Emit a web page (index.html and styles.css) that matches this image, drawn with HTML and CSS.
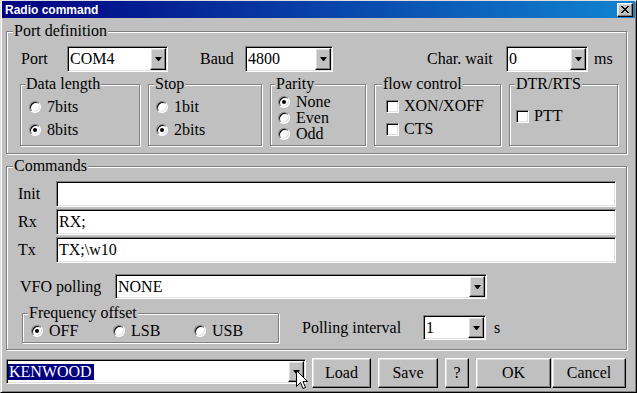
FILE: index.html
```html
<!DOCTYPE html>
<html lang="en">
  <head>
    <meta charset="UTF-8" />
    <meta name="viewport" content="width=device-width, initial-scale=1.0" />
    <title>Radio command</title>
    <link rel="stylesheet" href="styles.css">
  </head>
  <body>
    <div class="window">
      <div class="titlebar">
        <span class="title">Radio command</span>
        <span class="close raised">
          <svg width="8" height="7" viewBox="0 0 8 7" shape-rendering="crispEdges"><path d="M0 0h2v1h1v1h2v-1h1v-1h2v1h-1v1h-1v1h-1v1h1v1h1v1h1v1h-2v-1h-1v-1h-2v1h-1v1h-2v-1h1v-1h1v-1h1v-1h-1v-1h-1v-1h-1z" fill="#000"/></svg>
        </span>
      </div>

      <div class="client">
        <fieldset class="group port">
          <legend>Port definition</legend>
          <div class="port-row">
            <span class="lbl lbl-port">Port</span>
            <div class="combo combo-port"><span class="val">COM4</span><span class="drop raised"></span></div>
            <span class="lbl lbl-baud">Baud</span>
            <div class="combo combo-baud"><span class="val">4800</span><span class="drop raised"></span></div>
            <span class="lbl lbl-wait">Char. wait</span>
            <div class="combo combo-wait"><span class="val">0</span><span class="drop raised"></span></div>
            <span class="lbl lbl-ms">ms</span>
          </div>

          <div class="sub-row">
            <fieldset class="group sub sub-data">
              <legend>Data length</legend>
              <div class="opts">
                <div class="opt"><span class="radio"></span>7bits</div>
                <div class="opt"><span class="radio on"></span>8bits</div>
              </div>
            </fieldset>
            <fieldset class="group sub sub-stop">
              <legend>Stop</legend>
              <div class="opts">
                <div class="opt"><span class="radio"></span>1bit</div>
                <div class="opt"><span class="radio on"></span>2bits</div>
              </div>
            </fieldset>
            <fieldset class="group sub sub-parity">
              <legend>Parity</legend>
              <div class="opts">
                <div class="opt"><span class="radio on"></span>None</div>
                <div class="opt"><span class="radio"></span>Even</div>
                <div class="opt"><span class="radio"></span>Odd</div>
              </div>
            </fieldset>
            <fieldset class="group sub sub-flow">
              <legend>flow control</legend>
              <div class="opts">
                <div class="opt"><span class="check"></span>XON/XOFF</div>
                <div class="opt"><span class="check"></span>CTS</div>
              </div>
            </fieldset>
            <fieldset class="group sub sub-dtr">
              <legend>DTR/RTS</legend>
              <div class="opts">
                <div class="opt"><span class="check"></span>PTT</div>
              </div>
            </fieldset>
          </div>
        </fieldset>

        <fieldset class="group commands">
          <legend>Commands</legend>
          <div class="cmd-body">
            <div class="cmd-row"><span class="lbl lbl-cmd">Init</span><div class="field"></div></div>
            <div class="cmd-row"><span class="lbl lbl-cmd">Rx</span><div class="field">RX;</div></div>
            <div class="cmd-row"><span class="lbl lbl-cmd">Tx</span><div class="field">TX;\w10</div></div>

            <div class="vfo-row">
              <span class="lbl lbl-vfo">VFO polling</span>
              <div class="combo combo-vfo"><span class="val">NONE</span><span class="drop raised"></span></div>
            </div>

            <div class="offset-row">
              <fieldset class="group sub sub-offset">
                <legend>Frequency offset</legend>
                <div class="offset-opts">
                  <div class="opt opt-off"><span class="radio on"></span>OFF</div>
                  <div class="opt opt-lsb"><span class="radio"></span>LSB</div>
                  <div class="opt"><span class="radio"></span>USB</div>
                </div>
              </fieldset>
              <span class="lbl lbl-poll">Polling interval</span>
              <div class="combo combo-poll"><span class="val">1</span><span class="drop raised"></span></div>
              <span class="lbl lbl-s">s</span>
            </div>
          </div>
        </fieldset>

        <div class="bottom-row">
          <div class="combo combo-radio"><span class="val"><span class="selected">KENWOOD</span></span><span class="drop raised"></span></div>
          <button class="btn btn-load">Load</button>
          <button class="btn btn-save">Save</button>
          <button class="btn btn-help">?</button>
          <button class="btn btn-ok">OK</button>
          <button class="btn btn-cancel">Cancel</button>
        </div>
      </div>

      <svg class="cursor" width="13" height="20" viewBox="0 0 13 20">
        <path d="M0.5 0.5V16.5L4.5 12.5L7 18.5L9.5 17.5L7 11.5H11.5Z" fill="#fff" stroke="#000" stroke-width="1" stroke-linejoin="miter"/>
      </svg>
    </div>
  </body>
</html>
```

FILE: styles.css
```css
body {
  margin: 0;
  background: #c0c0c0;
  font-family: "Liberation Serif", "Times New Roman", serif;
  font-size: 16px;
  line-height: 18px;
  color: #000;
}

.window {
  position: relative;
  width: 637px;
  height: 393px;
  box-sizing: border-box;
  padding: 0 1px 1px 1px;
  border: 1px solid;
  border-color: #dfdfdf #000 #000 #dfdfdf;
  box-shadow: inset 1px 1px #fff, inset -1px -1px #808080;
  overflow: hidden;
}

.raised {
  box-sizing: border-box;
  background: #c0c0c0;
  border: 1px solid;
  border-color: #fff #000 #000 #fff;
  box-shadow: inset -1px -1px #808080, inset 1px 1px #dfdfdf;
}

/* title bar */
.titlebar {
  display: flex;
  align-items: center;
  justify-content: space-between;
  height: 17px;
  padding: 0 2px 0 3px;
  background: linear-gradient(to right, #000080, #1084d0);
}

.title {
  font: bold 12px "Liberation Sans", Arial, sans-serif;
  color: #fff;
}

.close {
  display: flex;
  align-items: center;
  justify-content: center;
  width: 16px;
  height: 14px;
}

.client {
  padding: 4px 8px 0 4px;
}

/* group boxes */
.group {
  margin: 0;
  padding: 0;
  min-width: 0;
  border: 1px solid #808080;
  box-shadow: 1px 1px 0 #fff, inset 1px 1px 0 #fff;
}

.group legend {
  padding: 0 1px;
  margin-left: 6px;
  line-height: 18px;
  background: #c0c0c0;
}

.lbl {
  flex: none;
  white-space: nowrap;
}

/* sunken controls */
.combo,
.field {
  box-sizing: border-box;
  display: flex;
  height: 26px;
  padding: 1px;
  background: #fff;
  border: 1px solid;
  border-color: #808080 #fff #fff #808080;
  box-shadow: inset 1px 1px #000, inset -1px -1px #dfdfdf;
  flex: none;
}

.field {
  padding-left: 2px;
  line-height: 22px;
}

.val {
  flex: 1;
  padding-left: 1px;
  line-height: 22px;
  white-space: nowrap;
}

.drop {
  display: flex;
  align-items: center;
  justify-content: center;
  width: 16px;
}

.drop::after {
  content: "";
  width: 1px;
  border-left: 3px solid transparent;
  border-right: 3px solid transparent;
  border-top: 4px solid #000;
}

/* port definition */
.port-row {
  display: flex;
  align-items: center;
  margin-top: 6px;
}

.lbl-port { margin-left: 14px; width: 46px; }
.combo-port { width: 101px; }
.lbl-baud { margin-left: 32px; width: 45px; }
.combo-baud { width: 88px; }
.lbl-wait { margin-left: 94px; width: 79px; }
.combo-wait { width: 82px; }
.lbl-ms { margin-left: 6px; }

.sub-row {
  display: flex;
  gap: 8px;
  margin: 3px 0 7px 13px;
}

.sub {
  box-sizing: border-box;
  height: 71px;
}

.sub-data { width: 120px; }
.sub-stop { width: 114px; }
.sub-parity { width: 96px; }
.sub-flow { width: 127px; }
.sub-dtr { width: 109px; }

.sub-data legend { margin-left: 4px; }
.sub-stop legend { margin-left: 5px; }
.sub-parity legend { margin-left: 4px; }
.sub-flow legend { margin-left: 7px; }
.sub-dtr legend { margin-left: 5px; }

.opts {
  display: flex;
  flex-direction: column;
  gap: 5px;
}

.sub-data .opts { padding: 5px 0 0 8px; }
.sub-stop .opts { padding: 5px 0 0 7px; }
.sub-parity .opts { padding: 1px 0 0 7px; gap: 0; }
.sub-flow .opts { padding: 4px 0 0 11px; }
.sub-dtr .opts { padding: 14px 0 0 6px; }

.opt {
  display: flex;
  align-items: center;
  gap: 6px;
  height: 18px;
  white-space: nowrap;
}

.sub-parity .opt { height: 16px; }
.sub-flow .opt,
.sub-dtr .opt { gap: 5px; }

.radio {
  position: relative;
  flex: none;
  box-sizing: border-box;
  width: 12px;
  height: 12px;
  border-radius: 50%;
  border: 1px solid;
  border-color: #808080 #fff #fff #808080;
  background: #fff;
  box-shadow: inset 1px 1px #000, inset -1px -1px #dfdfdf;
}

.radio.on::after {
  content: "";
  position: absolute;
  left: 3px;
  top: 3px;
  width: 4px;
  height: 4px;
  border-radius: 50%;
  background: #000;
}

.check {
  flex: none;
  box-sizing: border-box;
  width: 13px;
  height: 13px;
  border: 1px solid;
  border-color: #808080 #fff #fff #808080;
  background: #fff;
  box-shadow: inset 1px 1px #000, inset -1px -1px #dfdfdf;
}

/* commands */
.commands {
  margin-top: 3px;
}

.cmd-body {
  padding: 6px 0 6px 0;
}

.cmd-row {
  display: flex;
  align-items: center;
  margin-bottom: 2px;
}

.lbl-cmd { margin-left: 11px; width: 38px; }
.field { width: 560px; }

.vfo-row {
  display: flex;
  align-items: center;
  margin-top: 11px;
}

.lbl-vfo { margin-left: 13px; width: 95px; }
.combo-vfo { width: 372px; height: 25px; }

.offset-row {
  display: flex;
  align-items: flex-end;
  margin-top: 5px;
}

.sub-offset {
  margin-left: 15px;
  width: 257px;
  height: 39px;
}

.sub-offset legend { margin-left: 5px; }

.offset-opts {
  display: flex;
  padding-left: 8px;
}

.opt-off { width: 82px; }
.opt-lsb { width: 81px; }

.lbl-poll { margin: 0 0 6px 23px; width: 121px; }
.combo-poll { width: 63px; height: 25px; margin-bottom: 3px; }
.lbl-s { margin: 0 0 6px 8px; }

/* bottom row */
.bottom-row {
  display: flex;
  align-items: flex-start;
  margin-top: 8px;
}

.combo-radio {
  width: 300px;
  height: 25px;
  margin-top: 1px;
}

.combo-radio .val {
  padding-left: 0;
  display: flex;
  align-items: center;
}

.selected {
  padding: 0 2px 0 1px;
  line-height: 16px;
  background: #000080;
  color: #fff;
}

.btn {
  box-sizing: border-box;
  height: 30px;
  padding: 0;
  font: inherit;
  color: #000;
  background: #c0c0c0;
  border: 1px solid;
  border-color: #fff #000 #000 #fff;
  box-shadow: inset -1px -1px #808080, inset 1px 1px #dfdfdf;
  flex: none;
}

.btn-load { margin-left: 6px; width: 59px; }
.btn-save { margin-left: 7px; width: 60px; }
.btn-help { margin-left: 7px; width: 24px; }
.btn-ok { margin-left: 7px; width: 75px; }
.btn-cancel { margin-left: 1px; width: 74px; }

.cursor {
  position: absolute;
  left: 295px;
  top: 369px;
}
```
